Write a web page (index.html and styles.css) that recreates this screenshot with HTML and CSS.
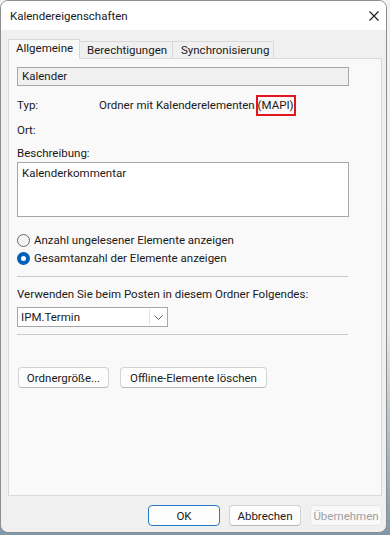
FILE: index.html
```html
<!DOCTYPE html>
<html lang="de">
<head>
    <meta charset="UTF-8">
    <meta name="viewport" content="width=device-width, initial-scale=1.0">
    <title>Kalendereigenschaften</title>
    <link rel="stylesheet" href="styles.css">
</head>
<body>
    <div class="window">
        <div class="titlebar">
            <span class="title">Kalendereigenschaften</span>
            <svg class="close" width="10" height="10" viewBox="0 0 10 10">
                <path d="M0.5 0.5 L9.5 9.5 M9.5 0.5 L0.5 9.5" stroke="#1a1a1a" stroke-width="1.1" fill="none"/>
            </svg>
        </div>

        <div class="content">
            <div class="tabs">
                <div class="tab tab-active tab-general">Allgemeine</div>
                <div class="tab tab-perm">Berechtigungen</div>
                <div class="tab tab-sync">Synchronisierung</div>
            </div>

            <div class="panel">
                <div class="name-field">Kalender</div>

                <div class="row row-type">
                    <span class="row-label">Typ:</span>
                    <span>Ordner mit Kalenderelementen <span class="mapi">(MAPI)</span></span>
                </div>
                <div class="row row-place">
                    <span class="row-label">Ort:</span>
                </div>

                <div class="desc-label">Beschreibung:</div>
                <div class="textarea">Kalenderkommentar</div>

                <div class="radios">
                    <div class="radio-row">
                        <span class="radio"></span>
                        <span>Anzahl ungelesener Elemente anzeigen</span>
                    </div>
                    <div class="radio-row">
                        <span class="radio radio-checked"></span>
                        <span>Gesamtanzahl der Elemente anzeigen</span>
                    </div>
                </div>

                <div class="separator sep-first"></div>

                <div class="post-label">Verwenden Sie beim Posten in diesem Ordner Folgendes:</div>
                <div class="combo">
                    <span class="combo-text">IPM.Termin</span>
                    <span class="combo-button">
                        <svg width="9" height="5" viewBox="0 0 9 5">
                            <polyline points="0.5,0.5 4.5,4.5 8.5,0.5" stroke="#5c5c5c" stroke-width="1" fill="none"/>
                        </svg>
                    </span>
                </div>

                <div class="separator sep-second"></div>

                <div class="actions">
                    <button class="button btn-size">Ordnergröße...</button>
                    <button class="button btn-offline">Offline-Elemente löschen</button>
                </div>
            </div>

            <div class="footer">
                <button class="button button-default">OK</button>
                <button class="button">Abbrechen</button>
                <button class="button button-disabled">Übernehmen</button>
            </div>
        </div>
    </div>
</body>
</html>
```

FILE: styles.css
```css
body {
    margin: 0;
    height: 535px;
    background: linear-gradient(#f2f3f4, #e9ecee 60%, #7f98aa);
    font-family: Roboto, "Noto Sans", sans-serif;
}
.window {
    width: 387px;
    height: 533px;
    box-sizing: border-box;
    border: 1px solid #8e8e8e;
    border-radius: 8px;
    background: #f0f0f0;
    overflow: hidden;
    font-size: 11.5px;
    color: #1a1a1a;
}
.titlebar {
    height: 29px;
    background: #ffffff;
    display: flex;
    align-items: center;
    justify-content: space-between;
    padding: 0 7px 0 9px;
}
.content {
    padding: 9px 0 0 7px;
}
.tabs {
    display: flex;
    align-items: flex-end;
    height: 19px;
}
.tab {
    box-sizing: border-box;
    height: 17px;
    line-height: 16px;
    padding-left: 7px;
    border: 1px solid #d9d9d9;
    border-bottom: none;
    background: #f0f0f0;
    margin-left: -1px;
    white-space: nowrap;
}
.tab-active {
    height: 20px;
    margin-left: 0;
    margin-bottom: -1px;
    background: #f9f9f9;
    position: relative;
    z-index: 1;
}
.tab-general {
    width: 72px;
}
.tab-perm {
    width: 94px;
}
.tab-sync {
    width: 102px;
    padding-left: 8px;
}
.panel {
    box-sizing: border-box;
    width: 374px;
    height: 438px;
    border: 1px solid #d9d9d9;
    background: #f9f9f9;
    padding: 8px 0 0 8px;
}
.name-field {
    box-sizing: border-box;
    width: 332px;
    height: 19px;
    border: 1px solid #a7a7a7;
    background: #f0f0f0;
    padding-left: 4px;
    line-height: 17px;
}
.row {
    display: flex;
    line-height: 16px;
    height: 16px;
}
.row-type {
    margin-top: 11px;
}
.row-place {
    margin-top: 9px;
}
.row-label {
    width: 82px;
}
.mapi {
    position: relative;
}
.mapi::after {
    content: "";
    position: absolute;
    left: -2px;
    right: -2px;
    top: -3px;
    bottom: -4px;
    border: 2.5px solid #e3151f;
}
.desc-label {
    margin-top: 7px;
    line-height: 16px;
}
.textarea {
    box-sizing: border-box;
    margin-top: 1px;
    width: 332px;
    height: 55px;
    border: 1px solid #a7a7a7;
    background: #ffffff;
    padding: 2px 4px;
    line-height: 16px;
}
.radios {
    margin-top: 15px;
}
.radio-row {
    display: flex;
    align-items: center;
    gap: 4px;
    height: 16px;
    line-height: 16px;
}
.radio-row + .radio-row {
    margin-top: 2px;
}
.radio {
    box-sizing: border-box;
    width: 13px;
    height: 13px;
    border: 1px solid #6a6a6a;
    border-radius: 50%;
    background: #f5f5f5;
}
.radio-checked {
    border: 4px solid #005fb8;
    background: #ffffff;
}
.separator {
    width: 331px;
    height: 1px;
    background: #c9c9c9;
}
.sep-first {
    margin-top: 10px;
}
.sep-second {
    margin-top: 7px;
}
.post-label {
    margin-top: 9px;
    line-height: 16px;
}
.combo {
    box-sizing: border-box;
    margin-top: 5px;
    width: 151px;
    height: 20px;
    border: 1px solid #a7a7a7;
    background: #ffffff;
    display: flex;
    align-items: center;
    justify-content: space-between;
}
.combo-text {
    padding-left: 3px;
}
.combo-button {
    box-sizing: border-box;
    width: 17px;
    height: 16px;
    margin-right: 1px;
    border-left: 1px solid #e3e3e3;
    display: flex;
    align-items: center;
    justify-content: center;
}
.actions {
    margin-top: 32px;
    display: flex;
    gap: 11px;
    padding-left: 1px;
}
.button {
    box-sizing: border-box;
    height: 21px;
    padding: 0;
    border: 1px solid #d3d3d3;
    border-bottom-color: #b8b8b8;
    border-radius: 4px;
    background: #fdfdfd;
    font-family: inherit;
    font-size: 11.5px;
    color: #1a1a1a;
}
.btn-size {
    width: 91px;
}
.btn-offline {
    width: 147px;
}
.footer {
    display: flex;
    justify-content: flex-end;
    gap: 9px;
    padding-top: 9px;
    width: 374px;
    box-sizing: border-box;
}
.footer .button {
    width: 72px;
}
.button-default {
    border: 1px solid #2a78c9;
}
.button-disabled {
    color: #a0a0a0;
    border-color: #e5e5e5;
    background: #f9f9f9;
}
```
